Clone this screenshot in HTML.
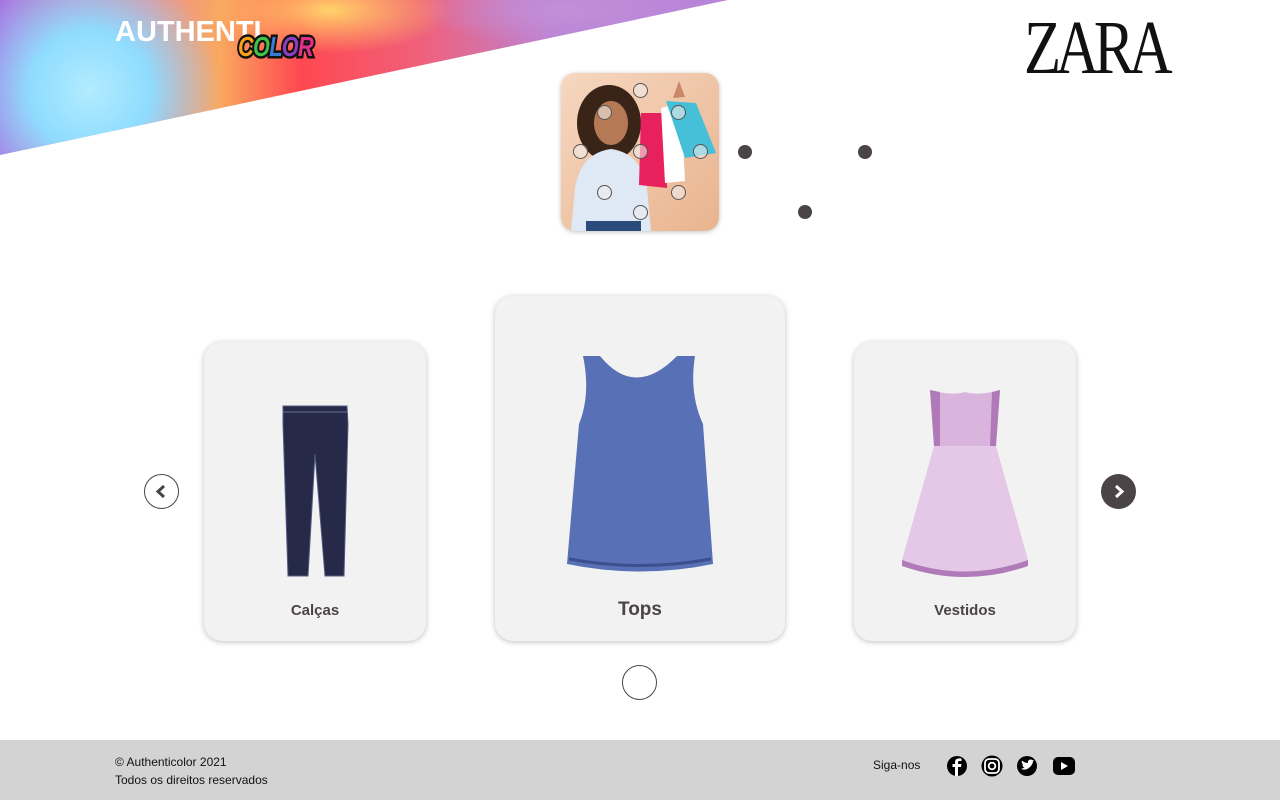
<!DOCTYPE html>
<html><head><meta charset="utf-8"><style>
*{margin:0;padding:0;box-sizing:border-box}
body{width:1280px;height:800px;position:relative;overflow:hidden;background:#fff;font-family:"Liberation Sans",sans-serif;color:#4a4446}
.banner{position:absolute;left:0;top:0;width:730px;height:156px;clip-path:polygon(0 0,728px 0,0 155px);
background:radial-gradient(circle at 90px 90px,#b2ecff 0,#8fdcff 60px,rgba(143,220,255,0) 130px),
radial-gradient(ellipse at 240px 160px,#c880d8 0,rgba(200,128,216,0) 90px),
radial-gradient(ellipse at 330px 10px,#ffd36a 0,rgba(255,211,106,0) 120px),
radial-gradient(ellipse at 560px 10px,#c28fd8 0,rgba(194,143,216,0) 140px),
linear-gradient(90deg,#a86ee0 0,#e88a9a 140px,#f9a860 220px,#ff4850 300px,#f0607a 420px,#b884d8 560px,#b884d8 730px)}
.card{position:absolute;background:#f3f2f3;border-radius:18px;box-shadow:0 1px 6px rgba(0,0,0,.25);text-align:center;font-weight:bold}
.dot{position:absolute;width:14px;height:14px;border-radius:50%;background:#4a4446}
.hc{position:absolute;width:15px;height:15px;border-radius:50%;border:1px solid #555;background:rgba(240,235,235,.6)}
footer{position:absolute;left:0;top:740px;width:1280px;height:60px;background:#d3d3d3;font-size:12px;color:#111}
</style></head><body>
<div class="banner"></div>
<div style="position:absolute;left:115px;top:16px;font-size:29px;font-weight:bold;color:#fff;letter-spacing:0px">AUTHENTI</div>
<div style="position:absolute;left:238px;top:31px;font-size:28px;font-weight:bold;font-style:italic;-webkit-text-stroke:5px #111;paint-order:stroke fill;letter-spacing:-1px;transform:scaleX(.78);transform-origin:left"><span style="color:#f7a21b">C</span><span style="color:#3fc24a">O</span><span style="color:#3a7bd5">L</span><span style="color:#8a3fc2">O</span><span style="color:#e0308a">R</span></div>
<div style="position:absolute;left:1024px;top:8px;font-family:'Liberation Serif',serif;font-size:76px;line-height:80px;color:#111;letter-spacing:-7px;transform:scaleX(.8);transform-origin:left">ZARA</div>

<div style="position:absolute;left:561px;top:73px;width:158px;height:158px;border-radius:14px;overflow:hidden;background:linear-gradient(135deg,#f6d7c0,#e9b48f);box-shadow:0 1px 5px rgba(0,0,0,.25)">
<svg width="158" height="158" viewBox="0 0 158 158">
<ellipse cx="48" cy="50" rx="32" ry="38" fill="#3a2418"/>
<ellipse cx="50" cy="50" rx="17" ry="22" fill="#b57a55"/>
<path d="M10 158 L14 115 Q20 80 50 76 Q80 80 86 115 L90 158Z" fill="#dfe8f5"/>
<rect x="25" y="148" width="55" height="10" fill="#2b4c7a"/>
<path d="M80 40 L104 40 L106 115 L78 112Z" fill="#e8215e"/>
<path d="M100 35 L120 30 L124 108 L104 110Z" fill="#fff"/>
<path d="M105 28 L135 30 L155 80 L124 85Z" fill="#45c0d8"/>
<path d="M112 25 L118 8 L124 24Z" fill="#c9886a"/>
</svg>
<div class="hc" style="left:72px;top:10px"></div><div class="hc" style="left:36px;top:32px"></div><div class="hc" style="left:110px;top:32px"></div>
<div class="hc" style="left:12px;top:71px"></div><div class="hc" style="left:72px;top:71px"></div><div class="hc" style="left:132px;top:71px"></div>
<div class="hc" style="left:36px;top:112px"></div><div class="hc" style="left:110px;top:112px"></div><div class="hc" style="left:72px;top:132px"></div>
</div>
<div class="dot" style="left:738px;top:145px"></div><div class="dot" style="left:858px;top:145px"></div><div class="dot" style="left:798px;top:205px"></div>

<div class="card" style="left:204px;top:342px;width:222px;height:299px">
<svg style="position:absolute;left:76px;top:62px" width="70" height="175" viewBox="0 0 70 175">
<path d="M3 2 L67 2 L68 20 L64 172 L45 172 L35 50 L28 172 L8 172 L3 20Z" fill="#262a48" stroke="#555a80" stroke-width="1"/>
<path d="M3 8 L67 8" stroke="#6b6f95"/></svg>
<div style="position:absolute;bottom:22px;width:100%;font-size:15px">Calças</div></div>

<div class="card" style="left:495px;top:296px;width:290px;height:345px">
<svg style="position:absolute;left:70px;top:58px" width="150" height="220" viewBox="0 0 150 220">
<path d="M18 2 L35 2 Q70 45 112 2 L130 2 Q124 40 138 70 L148 210 Q75 225 2 210 L14 70 Q26 40 18 2Z" fill="#5870b5"/>
<path d="M4 205 Q75 218 146 205" stroke="#3a4f8c" stroke-width="3" fill="none"/></svg>
<div style="position:absolute;bottom:20px;width:100%;font-size:19px">Tops</div></div>

<div class="card" style="left:854px;top:342px;width:222px;height:299px">
<svg style="position:absolute;left:46px;top:46px" width="130" height="190" viewBox="0 0 130 190">
<path d="M30 2 Q50 8 65 4 Q80 8 100 2 L96 58 L34 58Z" fill="#d9b4dc"/>
<path d="M30 2 L40 4 L40 58 L34 58Z M92 4 L100 2 L96 58 L90 58Z" fill="#b07ab8"/>
<path d="M34 58 L96 58 L128 172 Q65 195 2 172Z" fill="#e5c7e8"/>
<path d="M2 172 Q65 195 128 172 L128 178 Q65 200 2 178Z" fill="#b07ab8"/></svg>
<div style="position:absolute;bottom:22px;width:100%;font-size:15px">Vestidos</div></div>

<div style="position:absolute;left:144px;top:474px;width:35px;height:35px;border-radius:50%;border:1px solid #4a4446;background:#fff"><svg width="33" height="33"><path d="M19 11 L13 16.5 L19 22" stroke="#4a4446" stroke-width="3" fill="none"/></svg></div>
<div style="position:absolute;left:1101px;top:474px;width:35px;height:35px;border-radius:50%;background:#4a4446"><svg width="35" height="35"><path d="M15 12 L21 17.5 L15 23" stroke="#fff" stroke-width="3" fill="none"/></svg></div>
<div style="position:absolute;left:622px;top:665px;width:35px;height:35px;border-radius:50%;border:1px solid #4a4446"></div>

<footer>
<div style="position:absolute;left:115px;top:13px;line-height:18px">© Authenticolor 2021<br>Todos os direitos reservados</div>
<div style="position:absolute;left:873px;top:18px">Siga-nos</div>
<svg style="position:absolute;left:946px;top:15px" width="130" height="22" viewBox="0 0 130 22">
<circle cx="11" cy="11" r="10" fill="#000"/><path d="M12 21 V12 H15 L15.5 9 H12 V7.5 Q12 6 13.5 6 H15.5 V3.5 Q11 3 9.5 5 Q9 6 9 8 V9 H6.5 V12 H9 V21Z" fill="#fff"/>
<circle cx="46" cy="11" r="10.5" fill="#000"/><rect x="39" y="4" width="14" height="14" rx="4" fill="none" stroke="#fff" stroke-width="1.8"/><circle cx="46" cy="11" r="3.3" fill="none" stroke="#fff" stroke-width="1.8"/>
<circle cx="81" cy="11" r="10" fill="#000"/><path d="M75 14 Q80 16 84 12 Q87 9 87 6 L88.5 5 L86.8 5.2 Q85 3.8 83 5 Q81.5 6 82 8 Q78.5 8 76 5.5 Q75 8 77.5 10 L76.3 9.7 Q76.8 12 78.5 12.3 Q77 13.5 75 14Z" fill="#fff"/>
<rect x="107" y="2" width="22" height="18" rx="5" fill="#000"/><path d="M115 7 L122 11 L115 15Z" fill="#fff"/>
</svg>
</footer>
</body></html>
